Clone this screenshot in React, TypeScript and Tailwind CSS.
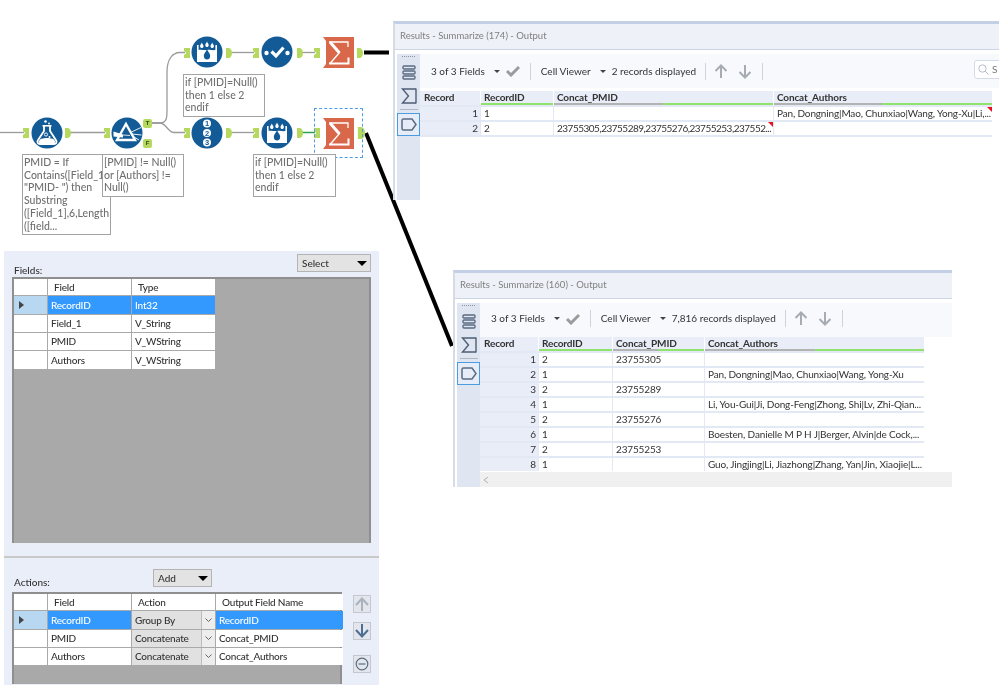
import type { ReactNode } from "react";

const ui = "font-['Lato','Noto_Sans',sans-serif]";
const BLUE = "#135b96";

// tool anchors
const InAnchor = ({ x, y }: { x: number; y: number }) => (
  <svg className="absolute" style={{ left: x, top: y }} width="6" height="10" viewBox="0 0 6 10">
    <path d="M0 0H6V10H0V7L2.5 5L0 3Z" fill="#b5d85f" />
  </svg>
);

const OutAnchor = ({ x, y, big }: { x: number; y: number; big?: boolean }) => (
  <svg className="absolute" style={{ left: x, top: y }} width={big ? 9 : 6} height={big ? 12 : 10} viewBox="0 0 6 10">
    <path d="M0 0H2.5C4.5 0 6 2.5 6 5C6 7.5 4.5 10 2.5 10H0Z" fill="#b5d85f" />
  </svg>
);

const Badge = ({ x, y, label }: { x: number; y: number; label: string }) => (
  <div
    className="absolute flex w-[9px] h-[9px] items-center justify-center rounded-[2px] bg-[#b5d85f] text-[6px] font-bold text-[#33421a] font-['Liberation_Sans',sans-serif]"
    style={{ left: x, top: y }}
  >
    {label}
  </div>
);

const Circle = ({ x, y, children }: { x: number; y: number; children: ReactNode }) => (
  <svg className="absolute" style={{ left: x - 16, top: y - 16 }} width="32" height="32" viewBox="0 0 32 32">
    <circle cx="16" cy="16" r="15.5" fill={BLUE} />
    {children}
  </svg>
);

const Flask = () => (
  <>
    <path d="M13 9V14L6.8 23.5C5.8 25.5 7 27 9 27H23C25 27 26.2 25.5 25.2 23.5L19 14V9" fill="none" stroke="#fff" strokeWidth="1.8" />
    <path d="M9 22.5C12 20.5 20 20.5 23 22.5L24.5 25C24 26 23 26 22 26H10C9 26 8 26 7.5 25Z" fill="#fff" />
    <circle cx="15" cy="17.5" r="1.6" fill="none" stroke="#fff" strokeWidth="0.9" />
    <circle cx="18.5" cy="20" r="1" fill="#fff" />
    <circle cx="14.5" cy="4.5" r="1.3" fill="#fff" />
    <circle cx="18" cy="6.5" r="0.9" fill="#fff" />
    <rect x="11.5" y="8" width="9" height="1.6" fill="#fff" />
  </>
);

const Prism = () => (
  <>
    <path d="M15 7L24 23H6Z" fill="none" stroke="#fff" strokeWidth="2.4" />
    <path d="M2.5 14.5L12 17.5V20.5L2.5 19.5Z" fill="#fff" />
    <path d="M12 18L19 18.5" stroke="#fff" strokeWidth="0.8" />
    <path d="M20.5 15L30 10.5M21 17L30.5 18M21.5 19L28 23" stroke="#fff" strokeWidth="0.9" />
  </>
);

const drop = (x: number, top: number, r: number) =>
  `M${x} ${top}C${x + r * 0.4} ${top + r} ${x + r} ${top + r * 1.5} ${x + r} ${top + r * 2.1}C${x + r} ${top + r * 2.9} ${x + r * 0.5} ${top + r * 3.3} ${x} ${top + r * 3.3}C${x - r * 0.5} ${top + r * 3.3} ${x - r} ${top + r * 2.9} ${x - r} ${top + r * 2.1}C${x - r} ${top + r * 1.5} ${x - r * 0.4} ${top + r} ${x} ${top}Z`;

const Bucket = () => (
  <>
    <path d="M6 9H7.6V14C10 13 13 14.5 16 14C19 13.5 22 14.5 24.4 14V9H26V26H6Z" fill="#fff" />
    <path d={drop(10.8, 6.5, 1.7)} fill="#fff" />
    <path d={drop(16, 5.5, 1.7)} fill="#fff" />
    <path d={drop(21.2, 6.5, 1.7)} fill="#fff" />
    <path d={drop(16, 13, 3.2)} fill={BLUE} />
  </>
);

const Check = () => (
  <>
    <circle cx="5.5" cy="17" r="2.2" fill="#fff" />
    <circle cx="26.5" cy="17" r="2.2" fill="#fff" />
    <path d="M10.5 15.5L15 20L22.5 11.5" fill="none" stroke="#fff" strokeWidth="3.2" />
  </>
);

const Numbers = () => (
  <>
    {[6.5, 16, 25.5].map((cy, i) => (
      <g key={cy}>
        <circle cx="16" cy={cy} r="4" fill="#fff" />
        <text x="16" y={cy + 2.6} textAnchor="middle" fontSize="7.5" fontWeight="700" fill={BLUE} fontFamily="Liberation Sans, sans-serif">
          {i + 1}
        </text>
      </g>
    ))}
  </>
);

const SigmaNode = ({ x, y }: { x: number; y: number }) => (
  <svg className="absolute" style={{ left: x, top: y }} width="31" height="31" viewBox="0 0 31 31">
    <path d="M0 0H31V31H0L3 27V4Z" fill="#d9684a" />
    <path d="M6 5H25V10" fill="none" stroke="#fff" strokeWidth="1.3" />
    <path d="M7 5L16.5 16" fill="none" stroke="#fff" strokeWidth="3" />
    <path d="M16.5 15.5L7 26.5" fill="none" stroke="#fff" strokeWidth="1.3" />
    <path d="M6 26.5H25.5V20.5" fill="none" stroke="#fff" strokeWidth="2" />
  </svg>
);

const Note = ({ x, y, w, h, lines }: { x: number; y: number; w: number; h: number; lines: string[] }) => (
  <div
    className="absolute border border-[#a3a3a3] bg-white pl-[1px] pt-[1px] text-[10.5px] leading-[12.7px] font-medium text-[#6f6f6f] whitespace-nowrap overflow-hidden"
    style={{ left: x, top: y, width: w, height: h }}
  >
    {lines.map((l) => (
      <div key={l}>{l}</div>
    ))}
  </div>
);

const Workflow = () => (
  <>
    <svg className="absolute left-0 top-0" width="999" height="689" viewBox="0 0 999 689">
      <g fill="none" stroke="#9b9b9b" strokeWidth="1.3">
        <path d="M0 132.5H24" />
        <path d="M70 132.5H105" />
        <path d="M151 123H160C168 123 167 115 167 105V72C167 60 172 52.5 180 52.5H185" />
        <path d="M151 123H160C166 123 168 132.5 174 132.5H185" />
        <path d="M231 52.5H254" />
        <path d="M302 52.5H315" />
        <path d="M231 132.5H254" />
      </g>
      <path d="M302 132.5H315" stroke="#2ba24c" strokeWidth="1.5" fill="none" />
      <path d="M364 52.5H389" stroke="#000" strokeWidth="4" />
      <path d="M366 133L452 346" stroke="#000" strokeWidth="4" />
    </svg>
    <InAnchor x={23} y={128} />
    <Circle x={46.5} y={133}><Flask /></Circle>
    <OutAnchor x={65} y={128} />
    <InAnchor x={104} y={128} />
    <Circle x={127} y={133}><Prism /></Circle>
    <Badge x={143} y={119} label="T" />
    <Badge x={143} y={139} label="F" />

    <InAnchor x={184} y={48} />
    <Circle x={207} y={52}><Bucket /></Circle>
    <OutAnchor x={226} y={48} />
    <InAnchor x={253} y={48} />
    <Circle x={277} y={52}><Check /></Circle>
    <OutAnchor x={297} y={48} />
    <InAnchor x={314} y={48} />
    <SigmaNode x={323} y={37} />
    <OutAnchor x={357} y={48} />

    <InAnchor x={184} y={128} />
    <Circle x={207} y={133}><Numbers /></Circle>
    <OutAnchor x={226} y={128} />
    <InAnchor x={253} y={128} />
    <Circle x={277} y={133}><Bucket /></Circle>
    <OutAnchor x={297} y={128} />
    <InAnchor x={314} y={128} />
    <SigmaNode x={323} y={118} />
    <OutAnchor x={357} y={127} big />
    <div className="absolute left-[314px] top-[108px] w-[49px] h-[50px] border border-dashed border-[#4a9be8]" />

    <Note x={22} y={154} w={89} h={81} lines={["PMID = If", "Contains([Field_1],", '"PMID- ") then', "Substring", "([Field_1],6,Length", "([field..."]} />
    <Note x={102} y={154} w={82} h={43} lines={["[PMID] != Null()", "or [Authors] !=", "Null()"]} />
    <Note x={183} y={74} w={82} h={43} lines={["if [PMID]=Null()", "then 1 else 2", "endif"]} />
    <Note x={253} y={154} w={83} h={43} lines={["if [PMID]=Null()", "then 1 else 2", "endif"]} />
  </>
);

const Divider = () => <div className="w-px h-[17px] bg-[#cfd3da]" />;

const Caret = () => <span className="w-0 h-0 border-x-[3px] border-x-transparent border-t-[3px] border-t-[#444]" />;

const Arrow = ({ down }: { down?: boolean }) => (
  <svg width="14" height="15" viewBox="0 0 14 15" fill="none" stroke="#a7acb3" strokeWidth="2">
    {down ? <path d="M7 1V13M1.5 8L7 13.5L12.5 8" /> : <path d="M7 14V2M1.5 7L7 1.5L12.5 7" />}
  </svg>
);

const SideBar = () => (
  <div className="flex w-[23px] shrink-0 flex-col items-center bg-[#dfe6f1]">
    <div className="mt-[2px] h-px w-[13px] border-t border-dotted border-[#8a94a5]" />
    <svg className="mt-[8px]" width="14" height="15" viewBox="0 0 14 15" fill="none" stroke="#5b6b82" strokeWidth="1.4">
      <rect x="1" y="1" width="12" height="3" rx="1" />
      <rect x="1" y="6" width="12" height="3" rx="1" />
      <rect x="1" y="11" width="12" height="3" rx="1" />
    </svg>
    <svg className="mt-[8px]" width="16" height="16" viewBox="0 0 16 16" fill="none" stroke="#4e5e75" strokeWidth="1.4">
      <path d="M15 1H1.5L7.5 8L1.5 15H15" />
      <path d="M15 0.5V15.5" />
    </svg>
    <div className="mt-[5px] h-px w-[18px] bg-[#aeb7c6]" />
    <div className="mt-[3px] flex h-[23px] w-[23px] items-center justify-center border border-[#4a9be0] bg-[#e6edf8]">
      <svg width="16" height="13" viewBox="0 0 16 13" fill="none" stroke="#5b6b82" strokeWidth="1.5">
        <path d="M2.5 1H11L15 6.5L11 12H2.5C1.5 12 1 11.5 1 10.5V2.5C1 1.5 1.5 1 2.5 1Z" />
      </svg>
    </div>
  </div>
);

type Row = { n: number; id: string; pmid?: string; authors?: string; pmidMore?: boolean; authorsMore?: boolean };

const Corner = () => (
  <span className="absolute right-0 top-0 w-0 h-0 border-l-[5px] border-l-transparent border-t-[5px] border-t-[#e8121a]" />
);

const Results = ({
  pos,
  title,
  count,
  cols,
  rowsTop,
  barPad,
  rows,
  pmidGray,
  authorsGray,
  search,
  scroll,
}: {
  pos: string;
  title: string;
  count: string;
  cols: string;
  rowsTop: string;
  barPad: string;
  rows: Row[];
  pmidGray: string;
  authorsGray: string;
  search?: boolean;
  scroll?: boolean;
}) => (
  <div className={`absolute flex flex-col overflow-hidden bg-white border-t-[3px] border-t-[#c3cfe4] border-l-2 border-l-[#d7dbe3] ${pos}`}>
    <div className="flex h-[26px] shrink-0 items-center border-b border-[#cdd5e3] bg-[#eef1f8] pl-[5px] text-[9.5px] text-[#7f7f7f]">
      {title}
    </div>
    <div className="flex min-h-0 flex-1 pt-[4px] pl-[2px]">
      <SideBar />
      <div className="flex min-w-0 flex-1 flex-col">
        <div className={`relative flex h-[34px] shrink-0 items-center bg-[#f8f9fd] pl-[11px] text-[10px] text-[#333] whitespace-nowrap ${barPad}`}>
          <span>3 of 3 Fields</span>
          <span className="ml-[9px] flex"><Caret /></span>
          <svg className="ml-[6px]" width="14" height="12" viewBox="0 0 14 12" fill="none" stroke="#9b9b9b" strokeWidth="3">
            <path d="M1 6L5 10L13 2" />
          </svg>
          <div className="ml-[10px]"><Divider /></div>
          <span className="ml-[10px]">Cell Viewer</span>
          <span className="ml-[9px] flex"><Caret /></span>
          <span className="ml-[6px]">{count}</span>
          <div className="ml-[9px]"><Divider /></div>
          <span className="ml-[8px] flex"><Arrow /></span>
          <span className="ml-[10px] flex"><Arrow down /></span>
          <div className="ml-[10px]"><Divider /></div>
          {search && (
            <div className="absolute left-[554px] top-[6px] flex h-[19px] w-[40px] items-center gap-[3px] rounded-l-[3px] border border-[#d5dbe6] bg-white pl-[3px] text-[#777]">
              <svg width="11" height="11" viewBox="0 0 11 11" fill="none" stroke="#b5bcc8" strokeWidth="1">
                <circle cx="4.5" cy="4.5" r="3.7" />
                <path d="M7.2 7.2L10.5 10.5" />
              </svg>
              S
            </div>
          )}
        </div>
        <div className={`flex min-h-0 flex-1 flex-col ${rowsTop}`}>
          <div className={`grid ${cols} w-fit gap-x-px h-[14px] shrink-0 bg-white text-[10px] tracking-[-0.15px] font-bold leading-[12px] text-[#333]`}>
            <div className="bg-[#e8edf7] pl-[4px]">Record</div>
            <div className="bg-[#e8edf7] pl-[3px] border-b-2 border-[#8fe26c]">RecordID</div>
            <div className="relative bg-[#e8edf7] pl-[3px] border-b-2 border-[#8fe26c]">
              Concat_PMID
              <span className={`absolute left-0 -bottom-[2px] h-[2px] bg-[#b3b3b3] ${pmidGray}`} />
            </div>
            <div className="relative bg-[#e8edf7] pl-[3px] border-b-2 border-[#8fe26c]">
              Concat_Authors
              <span className={`absolute left-0 -bottom-[2px] h-[2px] bg-[#b3b3b3] ${authorsGray}`} />
            </div>
          </div>
          {rows.map((r) => (
            <div key={r.n} className={`grid ${cols} w-fit gap-x-px h-[15px] shrink-0 border-t-2 last:h-[17px] last:border-b-2 border-[#e3e9f4] bg-[#e3e9f4] text-[10px] tracking-[-0.15px] leading-[13px] text-[#333] whitespace-nowrap`}>
              <div className="bg-[#e8edf7] pr-[2px] text-right">{r.n}</div>
              <div className="bg-white pl-[3px]">{r.id}</div>
              <div className={`relative overflow-hidden bg-white pl-[3px] ${r.pmidMore ? "tracking-[-0.5px]" : ""}`}>
                {r.pmid}
                {r.pmidMore && <Corner />}
              </div>
              <div className="relative overflow-hidden bg-white pl-[3px]">
                {r.authors}
                {r.authorsMore && <Corner />}
              </div>
            </div>
          ))}
          {scroll && (
            <div className="mt-auto flex h-[15px] shrink-0 items-center bg-[#f0f0f0] pl-[3px]">
              <svg width="6" height="8" viewBox="0 0 6 8" fill="none" stroke="#b0b0b0" strokeWidth="1">
                <path d="M5 1L1 4L5 7" />
              </svg>
            </div>
          )}
        </div>
      </div>
    </div>
  </div>
);

const Dropdown = ({ label, cls }: { label: string; cls: string }) => (
  <div className={`absolute flex h-[18px] items-center justify-between border border-[#b4b4b4] bg-[#e3e3e3] pl-[4px] pr-[3px] text-[10px] font-medium text-[#333] ${cls}`}>
    {label}
    <span className="w-0 h-0 border-x-[5px] border-x-transparent border-t-[5px] border-t-black" />
  </div>
);

const RowHead = ({ active }: { active?: boolean }) => (
  <div className={`flex items-center pl-[5px] ${active ? "bg-[#b8d8f2]" : "bg-white"}`}>
    {active && <span className="w-0 h-0 border-y-[4px] border-y-transparent border-l-[5px] border-l-[#444]" />}
  </div>
);

const cell = "flex items-center pl-[3px] bg-white text-[#333]";
const activeCell = "flex items-center pl-[3px] bg-[#3399ff] text-white";

const FieldsGrid = () => (
  <div className="grid h-[266px] w-[359px] grid-cols-[33px_83px_83px] content-start gap-px border-t-2 border-x-2 border-[#8f8f8f] bg-[#a9a9a9] text-[10px] tracking-[-0.2px] font-medium">
    <div className="h-[16px] bg-white" />
    <div className="flex items-center bg-white pl-[6px] text-[#333]">Field</div>
    <div className="flex items-center bg-white pl-[6px] text-[#333]">Type</div>
    <RowHead active />
    <div className={`${activeCell} h-[18px]`}>RecordID</div>
    <div className={activeCell}>Int32</div>
    <RowHead />
    <div className={`${cell} h-[17px]`}>Field_1</div>
    <div className={cell}>V_String</div>
    <RowHead />
    <div className={`${cell} h-[17px]`}>PMID</div>
    <div className={cell}>V_WString</div>
    <RowHead />
    <div className={`${cell} h-[18px]`}>Authors</div>
    <div className={cell}>V_WString</div>
  </div>
);

const ActionCell = ({ label }: { label: string }) => (
  <div className="flex items-center justify-between bg-[#e1e1e1] pl-[3px] text-[#333]">
    {label}
    <span className="flex h-full w-[14px] items-center justify-center border-l border-[#bdbdbd] bg-[#ededed]">
      <svg width="7" height="5" viewBox="0 0 7 5" fill="none" stroke="#555" strokeWidth="0.9">
        <path d="M0.5 0.5L3.5 3.5L6.5 0.5" />
      </svg>
    </span>
  </div>
);

const ActionsGrid = () => (
  <div className="grid h-[92px] w-[330px] grid-cols-[33px_83px_83px_127px] content-start gap-px border-t-2 border-x-2 border-[#8f8f8f] bg-[#a9a9a9] text-[10px] tracking-[-0.2px] font-medium">
    <div className="h-[16px] bg-white" />
    <div className="flex items-center bg-white pl-[6px] text-[#333]">Field</div>
    <div className="flex items-center bg-white pl-[6px] text-[#333]">Action</div>
    <div className="flex items-center bg-white pl-[6px] text-[#333]">Output Field Name</div>
    <RowHead active />
    <div className={`${activeCell} h-[18px]`}>RecordID</div>
    <ActionCell label="Group By" />
    <div className={activeCell}>RecordID</div>
    <RowHead />
    <div className={`${cell} h-[17px]`}>PMID</div>
    <ActionCell label="Concatenate" />
    <div className={cell}>Concat_PMID</div>
    <RowHead />
    <div className={`${cell} h-[17px]`}>Authors</div>
    <ActionCell label="Concatenate" />
    <div className={cell}>Concat_Authors</div>
  </div>
);

const SideButton = ({ children, cls }: { children: ReactNode; cls: string }) => (
  <div className={`flex h-[18px] w-[18px] items-center justify-center border border-[#c2c7d0] bg-[#e3e6ec] ${cls}`}>{children}</div>
);

const ConfigPanel = () => (
  <div className={`ml-[4px] mt-[251px] w-[375px] ${ui}`}>
    <div className="relative h-[292px] bg-[#e9eef8] pl-[8px] pt-[26px]">
      <div className="absolute left-[10px] top-[12px] text-[10px] font-medium text-[#333]">Fields:</div>
      <Dropdown label="Select" cls="left-[293px] top-[3px] w-[74px]" />
      <FieldsGrid />
    </div>
    <div className="h-[15px] bg-[#e9eef8] border-b-2 border-[#c9c9c9]" />
    <div className="relative h-[127px] bg-[#e9eef8] pl-[8px] pt-[34px]">
      <div className="absolute left-[10px] top-[17px] text-[10px] font-medium text-[#333]">Actions:</div>
      <Dropdown label="Add" cls="left-[149px] top-[11px] w-[59px]" />
      <div className="flex">
        <ActionsGrid />
        <div className="ml-[11px] flex flex-col pt-[3px]">
          <SideButton cls="">
            <svg width="14" height="14" viewBox="0 0 14 14" fill="none" stroke="#a9b2bd" strokeWidth="2">
              <path d="M7 14V2M1 8L7 1.5L13 8" />
            </svg>
          </SideButton>
          <SideButton cls="mt-[9px]">
            <svg width="14" height="14" viewBox="0 0 14 14" fill="none" stroke="#4d6f91" strokeWidth="2">
              <path d="M7 0V12M1 6L7 12.5L13 6" />
            </svg>
          </SideButton>
          <SideButton cls="mt-[15px]">
            <svg width="14" height="14" viewBox="0 0 14 14" fill="none" stroke="#5d6d80" strokeWidth="1.2">
              <circle cx="7" cy="7" r="5.8" />
              <path d="M3.5 7H10.5" />
            </svg>
          </SideButton>
        </div>
      </div>
    </div>
  </div>
);

const rowsTop: Row[] = [
  { n: 1, id: "1", authors: "Pan, Dongning|Mao, Chunxiao|Wang, Yong-Xu|Li,...", authorsMore: true },
  { n: 2, id: "2", pmid: "23755305,23755289,23755276,23755253,237552...", pmidMore: true },
];

const rowsBottom: Row[] = [
  { n: 1, id: "2", pmid: "23755305" },
  { n: 2, id: "1", authors: "Pan, Dongning|Mao, Chunxiao|Wang, Yong-Xu" },
  { n: 3, id: "2", pmid: "23755289" },
  { n: 4, id: "1", authors: "Li, You-Gui|Ji, Dong-Feng|Zhong, Shi|Lv, Zhi-Qian..." },
  { n: 5, id: "2", pmid: "23755276" },
  { n: 6, id: "1", authors: "Boesten, Danielle M P H J|Berger, Alvin|de Cock,..." },
  { n: 7, id: "2", pmid: "23755253" },
  { n: 8, id: "1", authors: "Guo, Jingjing|Li, Jiazhong|Zhang, Yan|Jin, Xiaojie|L..." },
];

export default function App() {
  return (
    <div className={`relative h-[689px] w-[999px] overflow-hidden bg-white blur-[0.3px] ${ui}`}>
      <ConfigPanel />
      <Workflow />
      <Results
        pos="left-[393px] top-[21px] w-[606px] h-[179px]"
        title="Results - Summarize (174) - Output"
        count="2 records displayed"
        cols="grid-cols-[60px_72px_219px_218px]"
        rowsTop="pt-[3px]"
        barPad=""
        rows={rowsTop}
        pmidGray="w-[109px]"
        authorsGray="w-[108px]"
        search
      />
      <Results
        pos="left-[453px] top-[270px] w-[499px] h-[217px]"
        title="Results - Summarize (160) - Output"
        count="7,816 records displayed"
        cols="grid-cols-[58px_73px_91px_219px]"
        rowsTop="pt-0"
        barPad="pb-[3px]"
        rows={rowsBottom}
        pmidGray="w-[45px]"
        authorsGray="w-[110px]"
        scroll
      />
    </div>
  );
}
